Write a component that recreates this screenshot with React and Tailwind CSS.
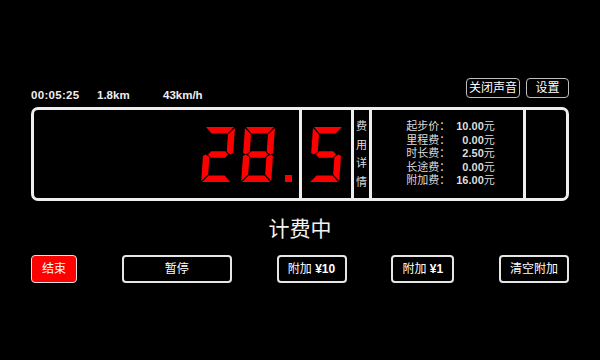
import React from "react";

// seven segment shapes, digit box 30x55
const SEGS = {
  a: "1,0 29,0 23,6.5 7,6.5",
  b: "30,1 30,26 27.5,27.5 23.5,25 23.5,7.5",
  c: "27.5,27.5 30,29 30,54 23.5,47.5 23.5,30",
  d: "7,48.5 23,48.5 29,55 1,55",
  e: "2.5,27.5 6.5,30 6.5,47.5 0,54 0,29",
  f: "0,1 6.5,7.5 6.5,25 2.5,27.5 0,26",
  g: "5,27.5 8,24.3 22,24.3 25,27.5 22,30.7 8,30.7",
};

const DIGITS = {
  2: ["a", "b", "g", "e", "d"],
  8: ["a", "b", "c", "d", "e", "f", "g"],
  5: ["a", "f", "g", "c", "d"],
};

function Digit({ n }) {
  return (
    <svg width="35" height="55" viewBox="0 0 35 55" aria-hidden="true">
      <g transform="translate(4 0) skewX(-4)" fill="#ff0000">
        {DIGITS[n].map((s) => (
          <polygon key={s} points={SEGS[s]} />
        ))}
      </g>
    </svg>
  );
}

function Dot() {
  return (
    <svg width="8" height="55" viewBox="0 0 8 55" aria-hidden="true">
      <rect x="0" y="48" width="7" height="7" fill="#ff0000" />
    </svg>
  );
}

const fees = [
  ["起步价：", "10.00"],
  ["里程费：", "0.00"],
  ["时长费：", "2.50"],
  ["长途费：", "0.00"],
  ["附加费：", "16.00"],
];

function App() {
  return (
    <div className="w-[600px] h-[360px] bg-black text-white px-[31px] pt-[78px] font-['Liberation_Sans','Noto_Sans_CJK_SC',sans-serif]">
      {/* header */}
      <div className="flex h-[23px] justify-between">
        <div className="flex self-end text-[11.5px] leading-[11px] font-bold text-[#eeeeee]">
          <span className="w-[66px] tracking-[0.3px]">00:05:25</span>
          <span className="w-[66px]">1.8km</span>
          <span>43km/h</span>
        </div>
        <div className="flex gap-[6px] self-start">
          <button className="h-[20px] w-[54px] border-[1.5px] border-[#bdbdbd] rounded-[4px] text-[12px] leading-none">
            关闭声音
          </button>
          <button className="h-[20px] w-[43px] border-[1.5px] border-[#bdbdbd] rounded-[4px] text-[12px] leading-none">
            设置
          </button>
        </div>
      </div>

      {/* meter */}
      <div className="mt-[6px] h-[94px] flex border-[3px] border-[#eeeeee] rounded-[7px]">
        <div
          aria-label="28."
          className="w-[268px] flex justify-end items-center pr-[6px] border-r-[3px] border-[#eeeeee]"
        >
          <Digit n={2} />
          <div className="w-[5px]" />
          <Digit n={8} />
          <div className="w-[9px]" />
          <Dot />
        </div>
        <div aria-label="5" className="w-[52px] flex justify-center items-center border-r-[3px] border-[#eeeeee]">
          <Digit n={5} />
        </div>
        <div className="w-[18px] flex flex-col items-center justify-center border-r-[3px] border-[#eeeeee] text-[11px] leading-[18.5px] text-[#dddddd]">
          <span>费</span>
          <span>用</span>
          <span>详</span>
          <span>情</span>
        </div>
        <div className="w-[154px] flex justify-center items-center pl-[6px] border-r-[3px] border-[#eeeeee]">
          <div className="grid grid-cols-[auto_auto] gap-x-[6px] text-[11px] leading-[13.4px] text-[#dddddd]">
            {fees.map(([label, value]) => (
              <React.Fragment key={label}>
                <span>{label}</span>
                <span className="text-right">
                  <b className="font-bold">{value}</b>元
                </span>
              </React.Fragment>
            ))}
          </div>
        </div>
        <div className="flex-1" />
      </div>

      {/* status */}
      <div className="mt-[16px] text-center text-[21px] leading-[24px] text-[#f2f2f2]">计费中</div>

      {/* actions */}
      <div className="mt-[14px] flex justify-between text-[12px]">
        <button className="h-[28px] w-[46px] bg-[#ff0000] border-[1.5px] border-[#e0e0e0] rounded-[4px]">结束</button>
        <button className="h-[28px] w-[110px] border-2 border-[#e6e6e6] rounded-[4px]">暂停</button>
        <button className="h-[28px] w-[70px] border-2 border-[#e6e6e6] rounded-[4px]">
          附加 <b className="font-bold">¥10</b>
        </button>
        <button className="h-[28px] w-[63px] border-2 border-[#e6e6e6] rounded-[4px]">
          附加 <b className="font-bold">¥1</b>
        </button>
        <button className="h-[28px] w-[70px] border-2 border-[#e6e6e6] rounded-[4px]">清空附加</button>
      </div>
    </div>
  );
}

export default App;
